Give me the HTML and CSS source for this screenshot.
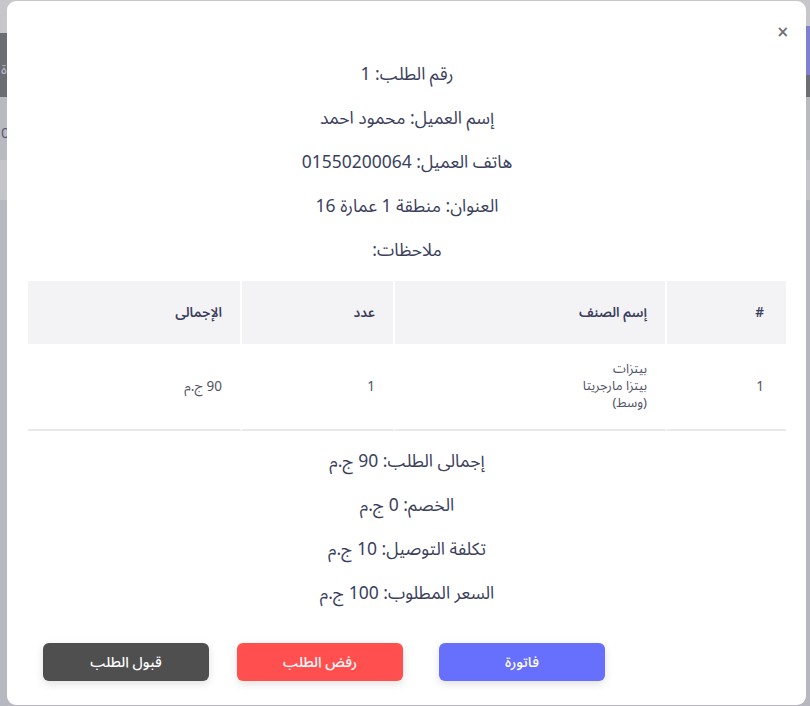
FILE: index.html
```html
<!DOCTYPE html>
<html lang="ar">
<head>
<meta charset="utf-8">
<title>تفاصيل الطلب</title>
<link rel="stylesheet" href="styles.css">
</head>
<body>
<div class="backdrop">
  <div class="band band-top"></div>
  <div class="band band-dark"><span class="ghost">ة</span></div>
  <div class="band band-mid"><span class="ghost ghost-blue">0</span></div>
  <div class="band band-light"></div>
  <div class="side-accent"></div>
</div>

<div class="modal" dir="rtl">
  <div class="modal-head">
    <button class="close" type="button" aria-label="إغلاق">×</button>
  </div>
  <div class="info">
    <p>رقم الطلب: 1</p>
    <p>إسم العميل: محمود احمد</p>
    <p>هاتف العميل: 01550200064</p>
    <p>العنوان: منطقة 1 عمارة 16</p>
    <p>ملاحظات:</p>
  </div>

  <table class="items">
    <thead>
      <tr>
        <th class="c-num">#</th>
        <th class="c-name">إسم الصنف</th>
        <th class="c-qty">عدد</th>
        <th class="c-total">الإجمالى</th>
      </tr>
    </thead>
    <tbody>
      <tr>
        <td class="c-num">1</td>
        <td class="c-name"><span class="ln">بيتزات</span><span class="ln">بيتزا مارجريتا</span><span class="ln">(وسط)</span></td>
        <td class="c-qty">1</td>
        <td class="c-total">90 ج.م</td>
      </tr>
    </tbody>
  </table>

  <div class="info totals">
    <p>إجمالى الطلب: 90 ج.م</p>
    <p>الخصم: 0 ج.م</p>
    <p>تكلفة التوصيل: 10 ج.م</p>
    <p>السعر المطلوب: 100 ج.م</p>
  </div>

  <div class="actions">
    <button class="btn btn-blue" type="button">فاتورة</button>
    <button class="btn btn-red" type="button">رفض الطلب</button>
    <button class="btn btn-dark" type="button">قبول الطلب</button>
  </div>
</div>
</body>
</html>
```

FILE: styles.css
```css
html, body {
  margin: 0;
  padding: 0;
}
body {
  width: 810px;
  height: 706px;
  overflow: hidden;
  background: #b7b8bf;
  font-family: "Noto Sans Arabic", "DejaVu Sans", "Noto Sans", sans-serif;
  position: relative;
}

/* dimmed page behind the dialog */
.backdrop {
  position: absolute;
  inset: 0;
}
.band {
  position: relative;
}
.band-top { height: 33px; background: #c6c6cb; }
.band-dark { height: 64px; background: #6d6e73; }
.band-mid { height: 63px; background: #b9b9c0; }
.band-light { height: 40px; background: #c4c4c9; }
.ghost {
  display: block;
  padding: 22px 0 0 1px;
  font-size: 14px;
  color: #b9bacb;
}
.ghost-blue { color: #55597a; padding-top: 20px; font-size: 15px; }
.side-accent {
  position: absolute;
  right: 0;
  top: 26px;
  width: 4px;
  height: 49px;
  background: #7f80d0;
}

/* dialog */
.modal {
  position: absolute;
  left: 7px;
  top: 1px;
  width: 799px;
  height: 704px;
  box-sizing: border-box;
  background: #fff;
  border-radius: 9px;
  padding: 0 20px 0 21px;
  color: #3b3f5c;
}
.modal-head {
  height: 52px;
  position: relative;
}
.close {
  position: absolute;
  right: -3px;
  top: 22px;
  border: 0;
  background: none;
  padding: 0;
  font-family: "DejaVu Sans", sans-serif;
  font-size: 15px;
  font-weight: bold;
  line-height: 18px;
  color: #6f6f75;
  cursor: pointer;
}

.info {
  text-align: center;
}
.info p {
  margin: 0;
  height: 44px;
  line-height: 44px;
  font-size: 17.5px;
  color: #3b3f5c;
}

.items {
  width: 758px;
  table-layout: fixed;
  margin: 8px 0 9px;
  border-collapse: separate;
  border-spacing: 0;
  font-size: 13.5px;
  color: #515365;
}
.items th,
.items td {
  box-sizing: border-box;
  text-align: right;
  border-right: 2px solid #fff;
}
.items th:first-child,
.items td:first-child {
  border-right: 0;
}
.items th {
  background: #f3f3f6;
  height: 63px;
  padding: 0 18px 0 20px;
  font-weight: 600;
  color: #3b3f5c;
  font-size: 13.5px;
}
.items td {
  padding: 17px 18px 17px 20px;
  line-height: 17px;
  border-bottom: 2px solid #e9e9ed;
}
.ln {
  display: block;
  height: 17px;
  line-height: 17px;
  font-size: 13px;
}
.c-num { width: 119px; padding-right: 22px !important; }
.c-name { width: 272px; }
.c-qty { width: 153px; }
.c-total { width: 214px; }

.actions {
  display: flex;
  flex-direction: row;
  padding: 27px 181px 0 0;
  gap: 36px;
}
.btn {
  width: 166px;
  height: 38px;
  border: 0;
  border-radius: 6px;
  color: #fff;
  font-family: inherit;
  font-size: 14.5px;
  font-weight: 500;
  box-shadow: 0 3px 8px rgba(0, 0, 0, 0.12);
  cursor: pointer;
}
.btn-red { margin-left: -8px; }
.btn-blue { background: #676ffd; }
.btn-red { background: #ff4f4f; }
.btn-dark { background: #4f4f4f; }
```
